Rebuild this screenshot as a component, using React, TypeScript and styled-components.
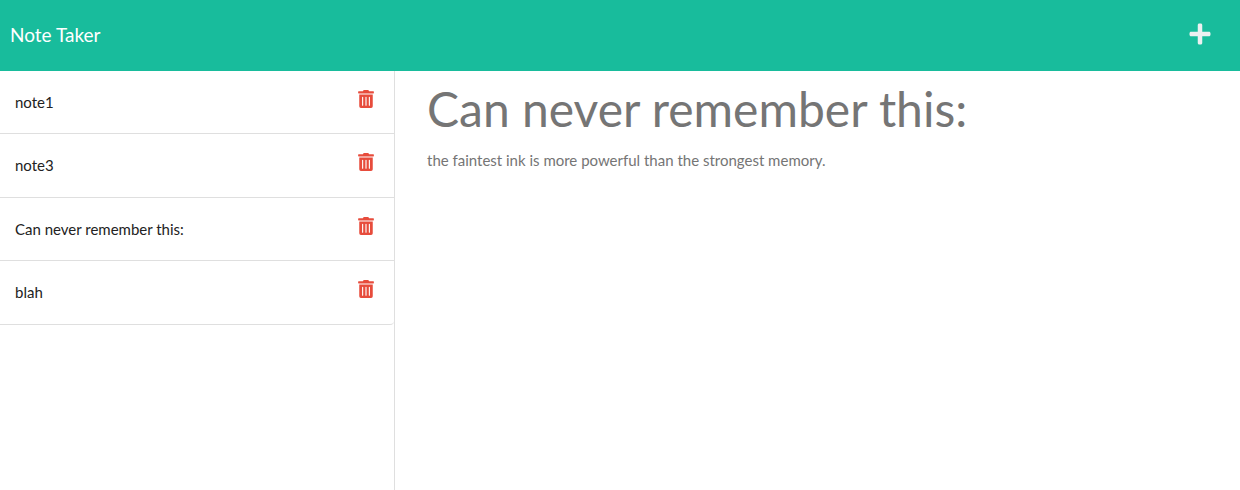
import React, { useState } from "react";
import styled, { createGlobalStyle } from "styled-components";
import { FaPlus, FaTrashAlt } from "react-icons/fa";

const GlobalStyle = createGlobalStyle`
  *, *::before, *::after { box-sizing: border-box; }
  body {
    margin: 0;
    background: #fff;
    color: #212529;
    font-family: Lato, "Open Sans", sans-serif;
    font-size: 15px;
    line-height: 1.5;
  }
`;

const Page = styled.div`
  display: flex;
  flex-direction: column;
  min-height: 100vh;
`;

const Navbar = styled.header`
  display: flex;
  align-items: center;
  justify-content: space-between;
  padding: 21px 28px 21px 10px;
  background: #18bc9c;
`;

const Brand = styled.a`
  color: #fff;
  font-size: 19px;
  text-decoration: none;
`;

const IconButton = styled.button`
  display: flex;
  padding: 0;
  border: 0;
  background: none;
  color: #e74c3c;
  font-size: 18px;
  cursor: pointer;
`;

const NewNoteButton = styled(IconButton)`
  padding-bottom: 2px;
  color: #ecf0f1;
  font-size: 24px;
`;

const Content = styled.div`
  display: flex;
  flex: 1;
`;

const Sidebar = styled.nav`
  flex: 0 0 395px;
  border-right: 1px solid #dfdfdf;
`;

const NoteList = styled.ul`
  margin: 0;
  padding: 0;
  list-style: none;
`;

const NoteItem = styled.li`
  display: flex;
  align-items: flex-start;
  justify-content: space-between;
  padding: 19px 19px 20px 15px;
  border-bottom: 1px solid #dfdfdf;
  color: #222;
  cursor: pointer;

  &:last-child {
    border-bottom-right-radius: 4px;
  }
`;

const NoteName = styled.span`
  padding-top: 1px;
`;

const Note = styled.main`
  flex: 1;
  padding: 9px 32px;
  color: #757575;
`;

const NoteTitle = styled.h1`
  margin: 0 0 11px;
  font-size: 48px;
  font-weight: 400;
  line-height: 58px;
`;

const NoteText = styled.p`
  margin: 0;
`;

const initialNotes = [
  { id: 1, title: "note1" },
  { id: 2, title: "note3" },
  { id: 3, title: "Can never remember this:" },
  { id: 4, title: "blah" },
];

export default function App() {
  const [notes, setNotes] = useState(initialNotes);
  return (
    <Page>
      <GlobalStyle />
      <Navbar>
        <Brand href="#">Note Taker</Brand>
        <NewNoteButton type="button" aria-label="New note">
          <FaPlus />
        </NewNoteButton>
      </Navbar>
      <Content>
        <Sidebar aria-label="Notes">
          <NoteList>
            {notes.map((note) => (
              <NoteItem key={note.id}>
                <NoteName>{note.title}</NoteName>
                <IconButton
                  type="button"
                  aria-label={`Delete ${note.title}`}
                  onClick={() => setNotes(notes.filter((n) => n.id !== note.id))}
                >
                  <FaTrashAlt />
                </IconButton>
              </NoteItem>
            ))}
          </NoteList>
        </Sidebar>
        <Note>
          <NoteTitle>Can never remember this:</NoteTitle>
          <NoteText>the faintest ink is more powerful than the strongest memory.</NoteText>
        </Note>
      </Content>
    </Page>
  );
}
